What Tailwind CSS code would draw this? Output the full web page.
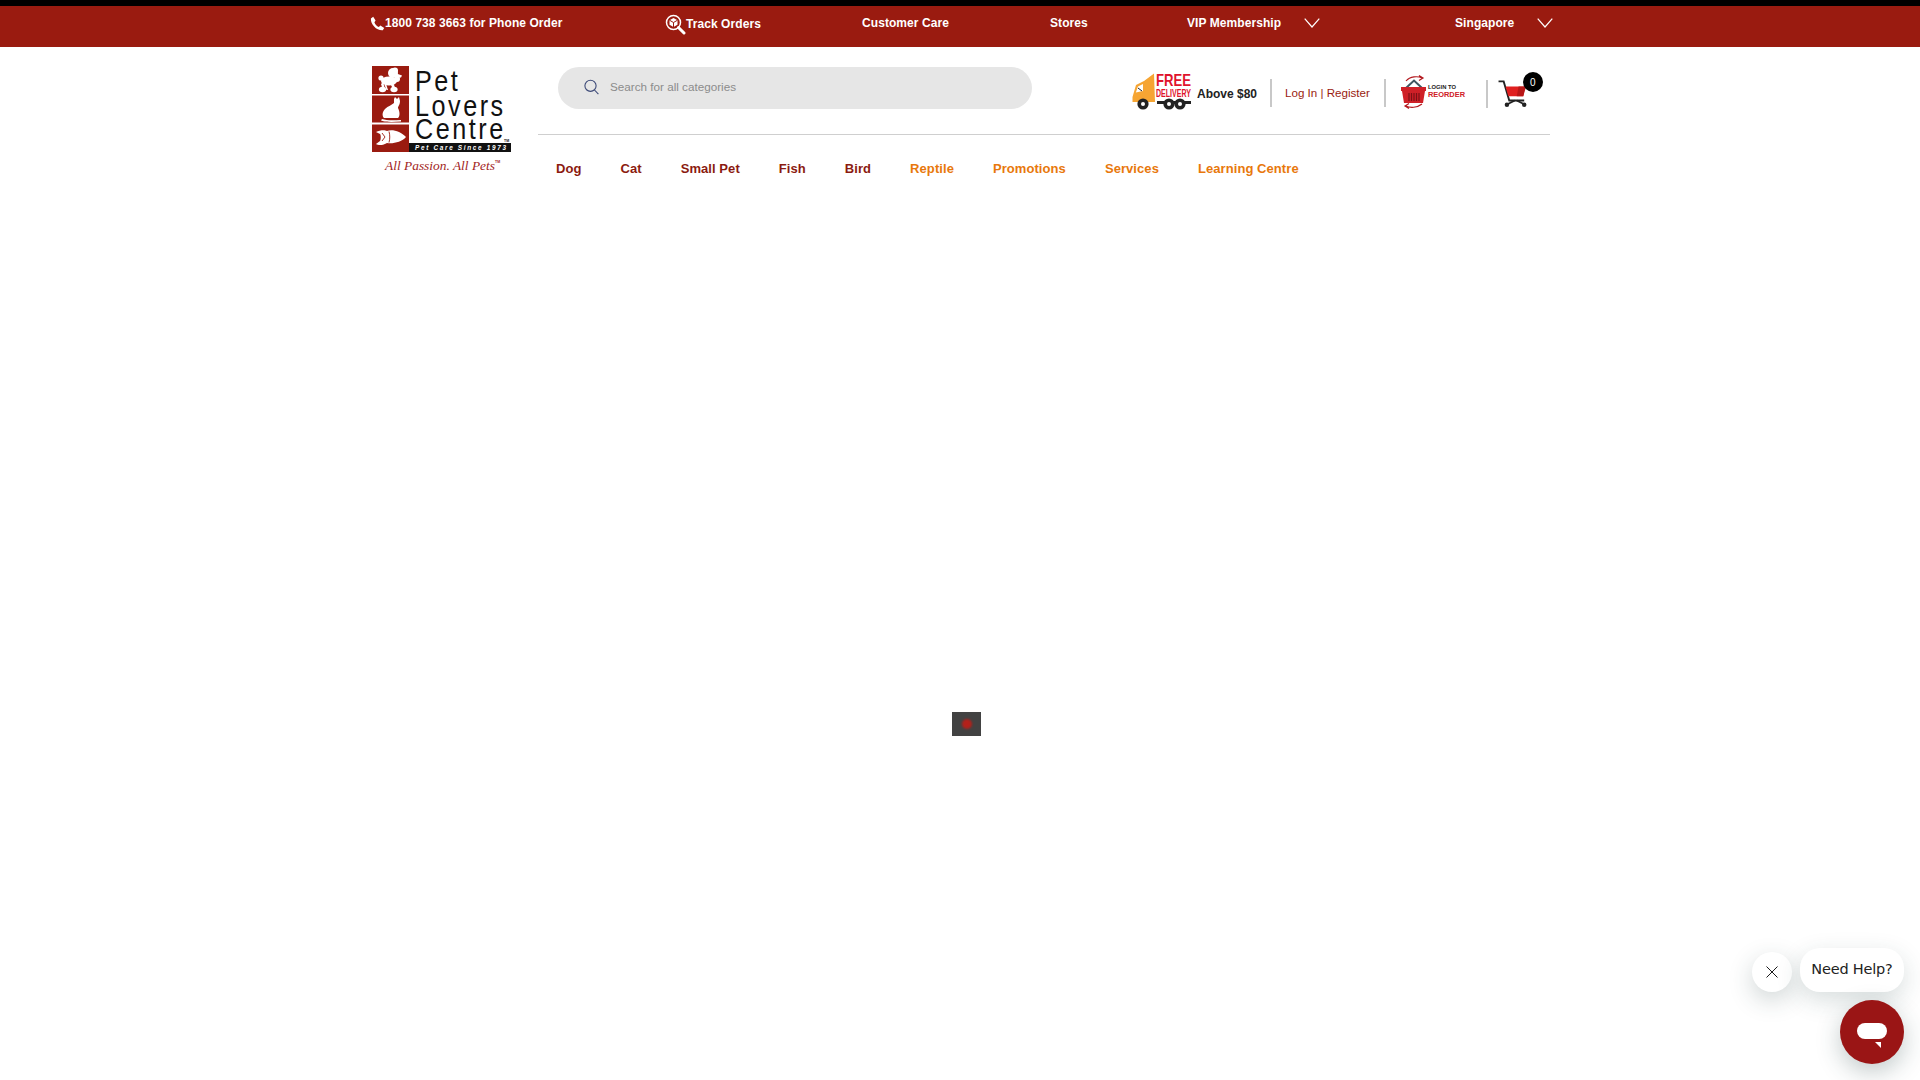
<!DOCTYPE html>
<html lang="en">
<head>
<meta charset="utf-8">
<title>Pet Lovers Centre</title>
<script src="https://cdn.jsdelivr.net/npm/@tailwindcss/browser@4"></script>
</head>
<body class="bg-white overflow-hidden font-['Liberation_Sans',Arial,sans-serif]">
<div class="relative w-[1920px] h-[1080px] overflow-hidden">
  <div class="h-[6px] bg-black"></div>
  <div class="h-[41px] bg-[#9a1b10] text-white text-[12px] font-bold tracking-[0.07px] flex items-center pl-[370px] pb-[7px]">
    <div class="w-[295px] flex items-center">
      <svg class="w-[15px] h-[15px] shrink-0 mt-[1px]" viewBox="0 0 15 15"><path d="M3.2 .8 L5.6 4.6 L4.4 6.2 C5 8.3 6.6 10 8.8 10.9 L10.4 9.6 L14.2 12 L12.8 14.2 C7 14.8 .4 8.5 .9 2.4 Z" fill="#fff"/></svg>
      <span>1800 738 3663 for Phone Order</span>
    </div>
    <div class="w-[197px] flex items-center">
      <svg class="w-[21px] h-[21px] shrink-0 mt-[3px]" viewBox="0 0 21 21"><circle cx="8.5" cy="8.5" r="7" fill="none" stroke="#fff" stroke-width="1.5"/><path d="M8.5 4 L12.5 6.2 V10.8 L8.5 13 L4.5 10.8 V6.2 Z" fill="#fff"/><path d="M4.5 6.2 L8.5 8.5 L12.5 6.2 M8.5 8.5 V13" stroke="#9a1b10" stroke-width="1" fill="none"/><path d="M13.5 13.5 L19 19" stroke="#fff" stroke-width="3" stroke-linecap="round"/></svg>
      <span class="mt-[2px]">Track Orders</span>
    </div>
    <div class="w-[188px]">Customer Care</div>
    <div class="w-[137px]">Stores</div>
    <div class="w-[117px]">VIP Membership</div>
    <svg class="w-[16px] h-[10px]" viewBox="0 0 16 10"><path d="M.7 .7 L8 9 L15.3 .7" fill="none" stroke="#fff" stroke-width="1.2"/></svg>
    <div class="ml-[135px] w-[82px]">Singapore</div>
    <svg class="w-[16px] h-[10px]" viewBox="0 0 16 10"><path d="M.7 .7 L8 9 L15.3 .7" fill="none" stroke="#fff" stroke-width="1.2"/></svg>
  </div>

  <div class="flex pl-[371px]">
    <div class="w-[167px] pt-[19px] shrink-0">
      <svg class="block w-[142px] h-[108px] overflow-visible" viewBox="0 0 142 108">
        <rect x="1" y="0" width="37" height="28" fill="#9a1b10"/>
        <rect x="1" y="29.5" width="37" height="27" fill="#9a1b10"/>
        <rect x="1" y="58.5" width="37" height="27.5" fill="#9a1b10"/>
        <g fill="#fff">
          <circle cx="22" cy="7" r="5"/><circle cx="24" cy="4.5" r="3"/>
          <path d="M24 7 L31 9.5 L30 11.5 L25 12 Z"/>
          <ellipse cx="18" cy="15" rx="8" ry="4.6"/>
          <circle cx="26" cy="13" r="3"/>
          <circle cx="10" cy="12" r="2.6"/>
          <path d="M11 13 L14 15" stroke="#fff" stroke-width="1.4"/>
          <path d="M12 16 L14 23 L11.5 23 L10 18 Z"/>
          <path d="M22 16 L24.5 23 L22 23 L19.5 18 Z"/>
          <ellipse cx="11.5" cy="23.5" rx="3.6" ry="2.8"/>
          <ellipse cx="23" cy="23.5" rx="3.6" ry="2.8"/>
          <path d="M15 18 L17 24 L15.5 24 L13.5 19 Z"/>
        </g>
        <path d="M23 33 L24 31 L26 33 L28 31 L29 35 C29 39 27 40 27 42 C29 46 29 50 27 52 L13 52 C11 50 11 46 14 43 C17 40 21 39 23 37 Z M11 53 C17 55 24 54 30 54 L30 55.5 C22 56 16 56.5 10 54.5 Z" fill="#fff"/>
        <path d="M5 66 C9 64 14 64 16 65 C22 63 30 66 35 71 C31 76 22 78 16 77 C13 79 8 80 5 78 L9 75 C10 73 10 69 9 68 Z" fill="#fff"/>
        <path d="M11 67 L14 71 L11 75 M18 65.5 C19 69 19 73 18 76.5" fill="none" stroke="#9a1b10" stroke-width=".9"/>
        <g fill="#111" font-family="'Liberation Sans',Arial,sans-serif" font-size="30">
          <text transform="translate(44,25) scale(.84,1)" textLength="51" lengthAdjust="spacing">Pet</text>
          <text transform="translate(44,50) scale(.84,1)" textLength="105" lengthAdjust="spacing">Lovers</text>
          <text transform="translate(44,73) scale(.84,1)" textLength="105" lengthAdjust="spacing">Centre</text>
        </g>
        <text x="133" y="76" font-size="3.5" font-weight="700" fill="#111" font-family="'Liberation Sans',Arial,sans-serif">TM</text>
        <rect x="38" y="77" width="102" height="9" fill="#111"/>
        <text x="44" y="84" font-size="6.4" font-weight="700" font-style="italic" fill="#fff" font-family="'Liberation Sans',Arial,sans-serif" textLength="91" lengthAdjust="spacing">Pet Care Since 1973</text>
        <text x="14" y="104" font-size="13" font-style="italic" fill="#a2241c" font-family="'Liberation Serif',serif" textLength="110" lengthAdjust="spacingAndGlyphs">All Passion. All Pets</text>
        <text x="124" y="97" font-size="3.5" font-weight="700" fill="#a2241c" font-family="'Liberation Sans',Arial,sans-serif">TM</text>
      </svg>
    </div>
    <div class="w-[1012px]">
      <div class="border-b border-[#cfcfcf] flex box-content h-[87px]">
        <div class="ml-[20px] mt-[20px] w-[474px] h-[42px] rounded-full bg-[#e6e6e6] flex items-center pl-[26px] shrink-0 pb-[2px]">
          <svg class="w-[15px] h-[16px] mr-[11px]" viewBox="0 0 15 16"><circle cx="6.5" cy="6.8" r="5.6" fill="none" stroke="#3d4a78" stroke-width="1.1"/><path d="M10.5 11 L14.4 15.2" stroke="#3d4a78" stroke-width="1.1"/></svg>
          <span class="text-[11.7px] text-[#8c8c8c]">Search for all categories</span>
        </div>
        <div class="ml-[100px] flex items-start shrink-0">
          <svg class="block w-[60px] h-[39px] mt-[26px] overflow-visible" viewBox="0 0 60 39">
            <path d="M.5 24 L4 12 L12 8 L22 .5 L23 29 L.5 29 Z" fill="#f6a533"/>
            <path d="M6 13.5 L11 11 L11 18 L3.8 19.5 Z" fill="#fff"/>
            <path d="M6 15 L10 18" stroke="#222" stroke-width="1"/>
            <circle cx="11" cy="31" r="5.6" fill="#222"/><circle cx="11" cy="31" r="2" fill="#fff"/>
            <rect x="25" y="28" width="34" height="3" fill="#222"/>
            <circle cx="37" cy="31" r="5.6" fill="#222"/><circle cx="37" cy="31" r="2" fill="#fff"/>
            <circle cx="48" cy="31" r="5.6" fill="#222"/><circle cx="48" cy="31" r="2" fill="#fff"/>
            <text x="24" y="13" font-size="16.5" font-weight="700" fill="#e0132c" font-family="'Liberation Sans',Arial,sans-serif" textLength="35" lengthAdjust="spacingAndGlyphs">FREE</text>
            <text x="24" y="24" font-size="11" font-weight="700" fill="#e0132c" font-family="'Liberation Sans',Arial,sans-serif" textLength="35" lengthAdjust="spacingAndGlyphs">DELIVERY</text>
          </svg>
          <span class="ml-[5px] mt-[38px] text-[12px] leading-[18px] font-bold text-[#222]">Above $80</span>
          <div class="ml-[13px] mt-[32px] w-[2px] h-[28px] bg-[#c8c8c8]"></div>
          <span class="ml-[13px] mt-[38px] text-[11.6px] leading-[16px] text-[#9a1b10] whitespace-nowrap">Log In | Register</span>
          <div class="ml-[14px] mt-[32px] w-[2px] h-[28px] bg-[#c8c8c8]"></div>
          <svg class="block ml-[15px] mt-[28px] w-[66px] h-[35px] overflow-visible" viewBox="0 0 66 35">
            <path d="M5 6 C9 1 17 1 21 3 M18 .5 L22 3 L18 5.5" fill="none" stroke="#b3191f" stroke-width="1.2"/>
            <path d="M21 29 C16 33 9 33 5 31 M8 28.5 L4 31 L8 33.5" fill="none" stroke="#b3191f" stroke-width="1.2"/>
            <path d="M5 13 L13 5.5 L21 13" fill="none" stroke="#3e5560" stroke-width="2"/>
            <path d="M0 12 H25 V16 H24 L22 28 H3 L1 16 H0 Z" fill="#cf2027"/>
            <path d="M8 18 V26 M10.5 18 V26 M13 18 V26 M15.5 18 V26 M18 18 V26" stroke="#7c1116" stroke-width="1.2"/>
            <text x="27" y="13.5" font-size="6" font-weight="700" fill="#222" font-family="'Liberation Sans',Arial,sans-serif" textLength="28" lengthAdjust="spacingAndGlyphs">LOGIN TO</text>
            <text x="27" y="21.5" font-size="8" font-weight="700" fill="#cf2027" font-family="'Liberation Sans',Arial,sans-serif" textLength="37" lengthAdjust="spacingAndGlyphs">REORDER</text>
          </svg>
          <div class="ml-[19px] mt-[33px] w-[2px] h-[28px] bg-[#c8c8c8]"></div>
          <div class="relative ml-[10px] mt-[33px] w-[30px] h-[28px]">
            <svg class="block w-[30px] h-[28px]" viewBox="0 0 32 30">
              <path d="M.5 1.5 H6 L12 22 H28" fill="none" stroke="#222" stroke-width="2"/>
              <path d="M8 7 H29 L27 17.5 H11 Z" fill="#e01f1f"/>
              <path d="M22 7 H30 L27 17.5 H20 Z" fill="#b91717"/>
              <path d="M10 26 L18 22 M28 26 L20 22" stroke="#222" stroke-width="2"/>
              <circle cx="9.5" cy="26.5" r="2.4" fill="#222"/><circle cx="28" cy="26.5" r="2.4" fill="#222"/>
            </svg>
            <div class="absolute left-[25px] top-[-8px] w-[20px] h-[20px] rounded-full bg-black text-white text-[10px] flex items-center justify-center">0</div>
          </div>
        </div>
      </div>
      <nav class="flex pl-[18px] pt-[26px] gap-[39px] text-[13px] leading-[16px] font-bold tracking-[0.07px] text-[#8b1a10]">
        <span>Dog</span>
        <span>Cat</span>
        <span>Small Pet</span>
        <span>Fish</span>
        <span>Bird</span>
        <span class="text-[#e8780c]">Reptile</span>
        <span class="text-[#e8780c]">Promotions</span>
        <span class="text-[#e8780c]">Services</span>
        <span class="text-[#e8780c]">Learning Centre</span>
      </nav>
    </div>
  </div>

  <div class="absolute left-[952px] top-[712px] w-[29px] h-[24px] bg-[#424242] flex items-center justify-center">
    <div class="w-[10px] h-[10px] rounded-full bg-[#b3201a] blur-[1px]"></div>
  </div>

  <div class="absolute left-[1752px] top-[952px] w-[40px] h-[40px] rounded-full bg-white shadow-[0_8px_24px_rgba(36,66,66,0.22)] flex items-center justify-center">
    <svg class="w-[12px] h-[12px]" viewBox="0 0 12 12"><path d="M.5 .5 L11.5 11.5 M11.5 .5 L.5 11.5" stroke="#1a1a1a" stroke-width="1"/></svg>
  </div>
  <div class="absolute left-[1800px] top-[948px] w-[104px] h-[44px] rounded-[20px] bg-white shadow-[0_8px_24px_rgba(36,66,66,0.18)] flex items-center justify-center pb-[1px] text-[14.5px] text-[#222] font-['DejaVu_Sans',sans-serif] tracking-[-0.2px] whitespace-nowrap">Need Help?</div>
  <div class="absolute left-[1840px] top-[1000px] w-[64px] h-[64px] rounded-full bg-[#9a1515] shadow-[0_8px_24px_rgba(36,66,66,0.28)] flex items-center justify-center">
    <svg class="w-[30px] h-[26px] mt-[8px]" viewBox="0 0 30 26"><rect x="0" y="0" width="30" height="16" rx="8" fill="#fff"/><path d="M18 19 L24 19 L24 25 Z" fill="#fff"/></svg>
  </div>
</div>
</body>
</html>
